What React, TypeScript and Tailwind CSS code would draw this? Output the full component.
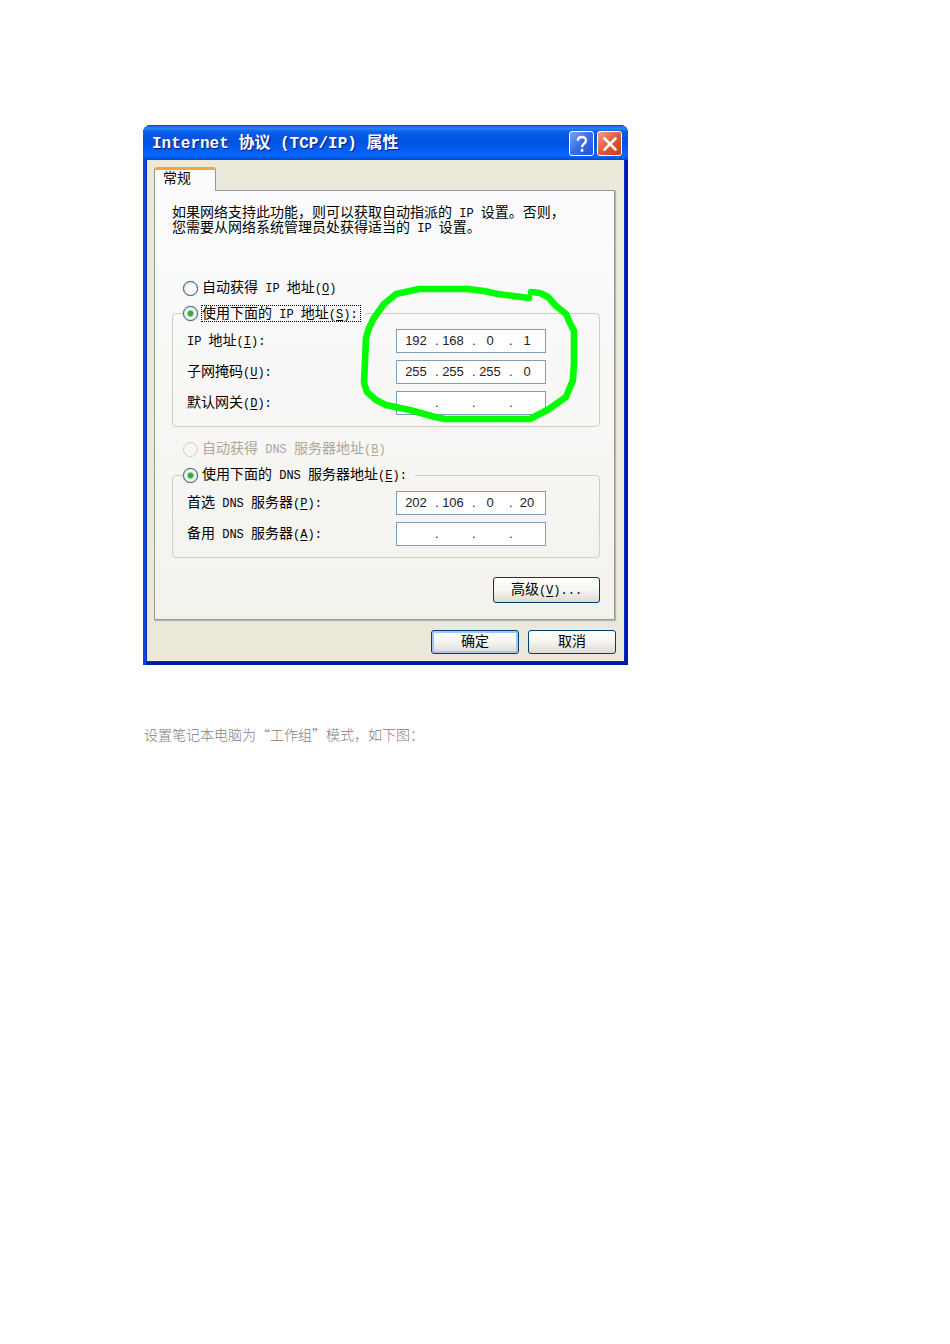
import { ReactNode } from "react";

function Latin({ children }: { children: ReactNode }) {
  return <span className="whitespace-pre font-['Liberation_Mono',monospace] text-[12px] leading-[0]">{children}</span>;
}

function Key({ letter, tail = "" }: { letter: string; tail?: string }) {
  return (
    <Latin>
      (<u className="underline-offset-2">{letter}</u>){tail}
    </Latin>
  );
}

function Radio(props: { id: string; name: string; checked?: boolean; disabled?: boolean }) {
  return (
    <input
      type="radio"
      id={props.id}
      name={props.name}
      defaultChecked={props.checked}
      disabled={props.disabled}
      className="m-0 size-[15px] shrink-0 appearance-none rounded-full border border-[#2a5585] bg-[radial-gradient(circle_at_60%_60%,#ffffff_30%,#dcdcd8_100%)] shadow-[0_0_1px_#5f86ad] checked:bg-[radial-gradient(circle,#37b034_0,#2fa52c_2px,#8fd58c_3px,#f4f6f2_4px,#eef1ee_100%)] disabled:border-[#cfcec0] disabled:bg-none disabled:shadow-none"
    />
  );
}

function IpField({ id, label, letter, parts }: { id: string; label: ReactNode; letter: string; parts: string[] }) {
  return (
    <div className="flex h-6 items-center">
      <label htmlFor={id} className="min-w-0 flex-1 pb-[3px] whitespace-nowrap">
        {label}
        <Key letter={letter} tail=":" />
      </label>
      <div className="flex h-6 w-[150px] items-center border border-[#7f9db9] bg-white pb-[2px] pl-1 font-['Liberation_Sans',sans-serif] text-[13px] text-[#222]">
        {parts.map((part, i) => (
          <div key={i} className="flex items-center">
            <input
              id={i === 0 ? id : `${id}-${i}`}
              aria-label={i === 0 ? undefined : `${id} ${i + 1}`}
              defaultValue={part}
              maxLength={3}
              className={
                i < 3
                  ? "h-5 w-[34px] bg-transparent pr-1 text-center outline-none"
                  : "h-5 w-[30px] bg-transparent text-center outline-none"
              }
            />
            {i < 3 && <span className="w-[3px] text-center">.</span>}
          </div>
        ))}
      </div>
    </div>
  );
}

const group = "min-w-0 rounded-[4px] border border-[#d0d0bf] pt-[7px] pr-[53px] pb-[11px] pl-[14px]";
const button =
  "rounded-[3px] border border-[#003c74] bg-linear-to-b from-white via-[#f5f5f1] to-[#dddbd0] pb-1 leading-none";

export default function App() {
  return (
    <main className="min-h-screen bg-white px-[143px] pt-[125px] font-['Noto_Sans_CJK_SC',sans-serif] text-[14px] leading-[15px] text-black">
      <section className="relative w-full max-w-[485px] rounded-t-[8px] bg-[#0a2cc4] pr-1 pb-1 pl-1 shadow-[inset_3px_0_0_#0a48dc,inset_-3px_0_0_#0019a8,inset_0_-3px_0_#001ea0]">
        <header className="-mx-1 flex h-[35px] items-center gap-[3px] rounded-t-[8px] bg-[linear-gradient(to_bottom,#0a48c8_0,#2b86fa_3px,#0a5ee6_7px,#0052e0_16px,#0560f4_26px,#0868fc_31px,#0047d0_35px)] pt-[2px] pr-[6px] pl-[9px]">
          <h1 className="flex-1 whitespace-nowrap font-['Liberation_Mono','Noto_Sans_CJK_SC',monospace] text-[16px] leading-6 font-bold text-white [text-shadow:1px_1px_1px_#0a1883]">
            Internet 协议 (TCP/IP) 属性
          </h1>
          <button
            aria-label="帮助"
            className="flex size-[25px] items-center justify-center rounded-[3px] border border-white bg-linear-to-br from-[#7ea2f4] via-[#3a6cea] to-[#1f50d8]"
          >
            <svg viewBox="0 0 22 22" className="size-[22px]" fill="none" stroke="white" strokeWidth="2.3">
              <path d="M6.8 7.8C6.8 2.8 15 2.8 15 7.4C15 10.6 11 10.6 11 14.2" />
              <path d="M11 16V18.8" strokeWidth="2.6" />
            </svg>
          </button>
          <button
            aria-label="关闭"
            className="flex size-[25px] items-center justify-center rounded-[3px] border border-white bg-linear-to-br from-[#f0a088] via-[#e2583a] to-[#c83c14]"
          >
            <svg viewBox="0 0 22 22" className="size-[22px]" fill="none" stroke="white" strokeWidth="2.6" strokeLinecap="round">
              <path d="M5.5 5.5L16.5 16.5M16.5 5.5L5.5 16.5" />
            </svg>
          </button>
        </header>

        <div className="bg-[#ebe9d9] pt-[7px] pr-[9px] pb-[7px] pl-[7px]">
          <div role="tablist" className="flex">
            <button
              role="tab"
              aria-selected="true"
              className="relative -mb-px flex h-6 w-[62px] rounded-t-[3px] border border-t-[3px] border-b-0 border-[#919b9c] border-t-[#f0a83a] bg-[#fcfcfe] pl-2 leading-[15px]"
            >
              常规
            </button>
          </div>

          <div className="border border-[#919b9c] bg-linear-to-b from-[#fcfcfe] to-[#f3f2ed] pt-[13px] pr-[14px] pb-4 pl-[17px] shadow-[1px_1px_1px_#b8b8ac]">
            <p className="whitespace-nowrap">
              如果网络支持此功能，则可以获取自动指派的<Latin> IP </Latin>设置。否则，
              <br />
              您需要从网络系统管理员处获得适当的<Latin> IP </Latin>设置。
            </p>

            <div className="relative mt-[46px]">
              <div className="flex h-4 items-center gap-1 pl-[11px]">
                <Radio id="ip-auto" name="ip" />
                <label htmlFor="ip-auto" className="pb-[3px]">
                  自动获得<Latin> IP </Latin>地址
                  <Key letter="O" />
                </label>
              </div>

              <fieldset className={`mt-2 ${group}`}>
                <legend className="-ml-1 flex h-[18px] items-center gap-[3px] pr-1">
                  <Radio id="ip-manual" name="ip" checked />
                  <label htmlFor="ip-manual" className="h-[17px] border border-dotted border-black pr-[2px] leading-[13px]">
                    使用下面的<Latin> IP </Latin>地址
                    <Key letter="S" tail=":" />
                  </label>
                </legend>
                <div className="flex flex-col gap-[7px]">
                  <IpField id="address" label={<><Latin>IP </Latin>地址</>} letter="I" parts={["192", "168", "0", "1"]} />
                  <IpField id="mask" label="子网掩码" letter="U" parts={["255", "255", "255", "0"]} />
                  <IpField id="gateway" label="默认网关" letter="D" parts={["", "", "", ""]} />
                </div>
              </fieldset>

              <svg
                viewBox="0 0 218 138"
                className="pointer-events-none absolute top-[5px] right-[22px] h-[138px] w-[218px]"
                fill="none"
                stroke="#00ff00"
                strokeWidth="6.6"
                strokeLinecap="round"
                strokeLinejoin="round"
              >
                <path d="M169 13L154 11L138 9L124 6L108 4H59L36 9L24 19L14 33L9 43L6 53L5 77L4 98L7 107L16 115L26 120L50 125L75 132L85 134H170L189 124L206 112L213 95L214 78V46L209 36L206 29L196 21L188 12L180 8L171 7" />
              </svg>
            </div>

            <div className="mt-[14px] flex h-4 items-center gap-1 pl-[11px] text-[#aca899]">
              <Radio id="dns-auto" name="dns" disabled />
              <label htmlFor="dns-auto" className="pb-[3px]">
                自动获得<Latin> DNS </Latin>服务器地址
                <Key letter="B" />
              </label>
            </div>

            <fieldset className={`mt-[9px] ${group}`}>
              <legend className="-ml-1 flex h-[18px] items-center gap-1 pr-2">
                <Radio id="dns-manual" name="dns" checked />
                <label htmlFor="dns-manual" className="pb-[3px]">
                  使用下面的<Latin> DNS </Latin>服务器地址
                  <Key letter="E" tail=":" />
                </label>
              </legend>
              <div className="flex flex-col gap-[7px]">
                <IpField id="dns-primary" label={<>首选<Latin> DNS </Latin>服务器</>} letter="P" parts={["202", "106", "0", "20"]} />
                <IpField id="dns-secondary" label={<>备用<Latin> DNS </Latin>服务器</>} letter="A" parts={["", "", "", ""]} />
              </div>
            </fieldset>

            <div className="mt-[19px] flex justify-end">
              <button className={`h-[26px] w-[107px] ${button}`}>
                高级
                <Key letter="V" tail="..." />
              </button>
            </div>
          </div>

          <div className="-mr-px flex justify-end gap-[9px] pt-[10px]">
            <button className={`h-6 w-[88px] shadow-[inset_0_0_0_2px_#a9c4f2] ${button}`}>确定</button>
            <button className={`h-6 w-[88px] ${button}`}>取消</button>
          </div>
        </div>
      </section>

      <p className="mt-[62px] ml-px font-light text-[#808080]">设置笔记本电脑为“工作组”模式，如下图：</p>
    </main>
  );
}
